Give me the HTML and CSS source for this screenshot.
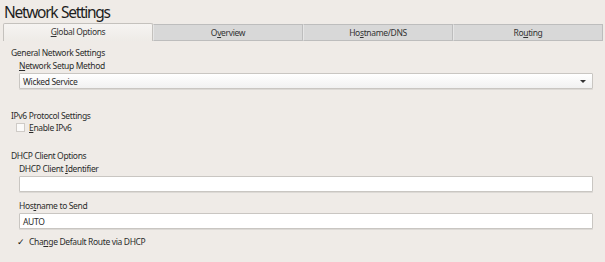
FILE: index.html
```html
<!DOCTYPE html>
<html lang="en">
<head>
  <meta charset="UTF-8" />
  <title>Network Settings</title>
  <link rel="stylesheet" href="styles.css">
</head>
<body>

  <h1 class="title">Network Settings</h1>

  <div class="tabs">
    <div class="tab active"><u>G</u>lobal Options</div>
    <div class="tab">O<u>v</u>erview</div>
    <div class="tab">Ho<u>s</u>tname/DNS</div>
    <div class="tab">Ro<u>u</u>ting</div>
  </div>

  <div class="pane">
    <div class="group">
      <div class="group-title">General Network Settings</div>
      <div class="field">
        <div class="label"><u>N</u>etwork Setup Method</div>
        <div class="select">
          <span>Wicked Service</span>
          <span class="arrow"></span>
        </div>
      </div>
    </div>

    <div class="group">
      <div class="group-title">IPv6 Protocol Settings</div>
      <label class="check">
        <span class="box"></span>
        <span><u>E</u>nable IPv6</span>
      </label>
    </div>

    <div class="group">
      <div class="group-title">DHCP Client Options</div>
      <div class="field">
        <div class="label">DHCP Client <u>I</u>dentifier</div>
        <div class="input"></div>
      </div>
      <div class="field">
        <div class="label">Hos<u>t</u>name to Send</div>
        <div class="input">AUTO</div>
      </div>
      <label class="check">
        <span class="box checked">&#10003;</span>
        <span>Cha<u>n</u>ge Default Route via DHCP</span>
      </label>
    </div>
  </div>

</body>
</html>
```

FILE: styles.css
```css
body {
  margin: 0;
  padding: 0 2px 0 3px;
  background: #efebe7;
  color: #2b2b2b;
  font-family: "Noto Sans", sans-serif;
  font-size: 8.5px;
  letter-spacing: -0.35px;
}

u {
  text-decoration-thickness: 1px;
  text-underline-offset: 1px;
}

.title {
  margin: 0;
  padding: 1px 0 0 1px;
  height: 23px;
  box-sizing: border-box;
  font-size: 15.5px;
  font-weight: normal;
  color: #1e1e1e;
  letter-spacing: -1.3px;
  word-spacing: 1px;
}

.tabs {
  display: flex;
  align-items: flex-end;
  height: 18px;
}

.tab {
  flex: 1;
  height: 17px;
  line-height: 15px;
  text-align: center;
  color: #333;
  background: #d8d8d8;
  border: 1px solid #bdbdbd;
  border-left: 1px solid #e6e6e6;
  box-sizing: border-box;
}

.tab.active {
  height: 18px;
  line-height: 16px;
  background: linear-gradient(#f6f4f2, #eeebe7);
  border-color: #c4c1bd;
  border-bottom: none;
  border-radius: 2px 2px 0 0;
}

.pane {
  padding: 6px 10px 0 8px;
}

.group {
  padding-bottom: 14px;
}

.group-title {
  height: 12px;
  line-height: 12px;
}

.field {
  padding-left: 8px;
  margin-bottom: 7px;
}

.label {
  height: 14px;
  line-height: 14px;
}

.select,
.input {
  display: flex;
  align-items: center;
  justify-content: space-between;
  height: 16px;
  padding: 0 6px 0 3px;
  box-sizing: border-box;
  background: #fff;
  border: 1px solid #c9c6c2;
  border-radius: 1px;
  box-shadow: 0 1px 0 #dcd9d5;
}

.select {
  background: linear-gradient(#ffffff, #f1f1f1);
}

.arrow {
  width: 0;
  height: 0;
  border-left: 3px solid transparent;
  border-right: 3px solid transparent;
  border-top: 3px solid #333;
}

.check {
  display: flex;
  align-items: center;
  gap: 4px;
  padding-left: 5px;
  height: 11px;
  margin-bottom: 3px;
}

.field + .check {
  margin-top: 2px;
}

.box {
  width: 9px;
  height: 9px;
  box-sizing: border-box;
  background: #fbfaf9;
  border: 1px solid #cfcbc7;
  font-size: 9px;
  line-height: 8px;
  text-align: center;
  color: #111;
}

.box.checked {
  background: none;
  border-color: transparent;
}
```
